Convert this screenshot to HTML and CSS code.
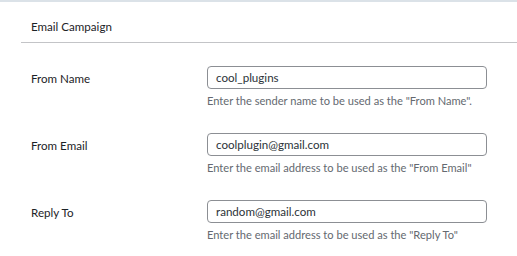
FILE: index.html
```html
<!DOCTYPE html>
<html lang="en">
<head>
<meta charset="utf-8">
<title>Email Campaign</title>
<link rel="stylesheet" href="styles.css">
</head>
<body>
<div class="panel">
  <div class="panel-header">Email Campaign</div>
  <div class="panel-body">
    <div class="row">
      <div class="label">From Name</div>
      <div class="field">
        <div class="input">cool_plugins</div>
        <div class="desc">Enter the sender name to be used as the "From Name".</div>
      </div>
    </div>
    <div class="row">
      <div class="label">From Email</div>
      <div class="field">
        <div class="input">coolplugin@gmail.com</div>
        <div class="desc">Enter the email address to be used as the "From Email"</div>
      </div>
    </div>
    <div class="row">
      <div class="label">Reply To</div>
      <div class="field">
        <div class="input">random@gmail.com</div>
        <div class="desc">Enter the email address to be used as the "Reply To"</div>
      </div>
    </div>
  </div>
</div>
</body>
</html>
```
FILE: styles.css
```css
html, body {
  margin: 0;
  padding: 0;
  background: #ffffff;
}
body {
  font-family: "Lato", "Open Sans", sans-serif;
  font-size: 11.6px;
  color: #1d2327;
}
.panel {
  border-top: 2px solid #dbe2e8;
}
.panel-header {
  height: 41px;
  box-sizing: border-box;
  padding: 16px 0 0 10px;
  line-height: 18px;
  border-bottom: 1px solid #c3c4c7;
  margin-left: 21px;
}
.panel-body {
  padding-top: 23px;
}
.row {
  display: flex;
  align-items: flex-start;
  height: 67px;
}
.label {
  width: 176px;
  padding-left: 31px;
  line-height: 23px;
  padding-top: 1px;
  color: #1d2327;
}
.field {
  display: flex;
  flex-direction: column;
}
.input {
  width: 280px;
  height: 23px;
  box-sizing: border-box;
  border: 1px solid #8c8f94;
  border-radius: 4px;
  padding: 0 8px;
  line-height: 21px;
  color: #2c3338;
}
.desc {
  margin-top: 3px;
  font-size: 11.1px;
  line-height: 18px;
  color: #646970;
  white-space: nowrap;
}
```
